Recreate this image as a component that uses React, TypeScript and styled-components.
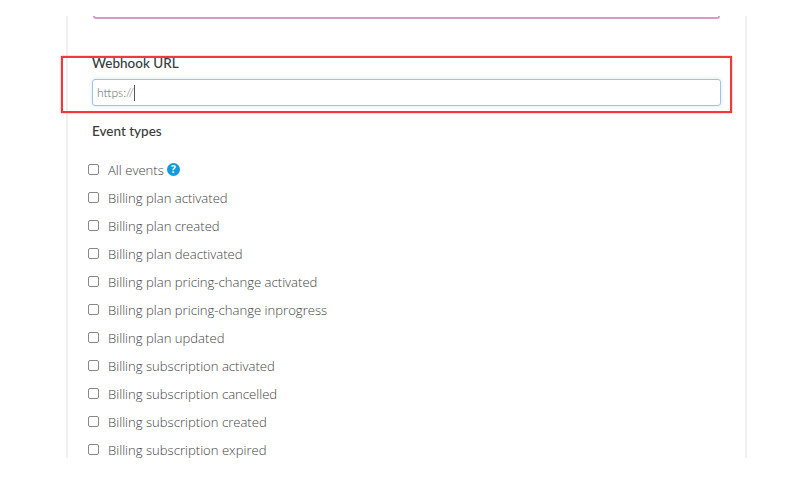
import React from "react";
import styled, { createGlobalStyle } from "styled-components";

const Global = createGlobalStyle`
  html, body { margin: 0; padding: 0; background: #fff; }
  body { width: 808px; height: 492px; overflow: hidden; font-family: "Open Sans", "Noto Sans", sans-serif; }
`;

const Page = styled.div`
  position: relative;
  width: 808px;
  height: 492px;
  padding: 16px 0 0 66px;
  box-sizing: border-box;
`;

const Panel = styled.div`
  width: 681px;
  height: 442px;
  box-sizing: border-box;
  border-left: 2px solid #f0f0f0;
  border-right: 2px solid #f0f0f0;
  padding: 0 24px 0 24px;
  overflow: hidden;
`;

const PinkEdge = styled.div`
  height: 1px;
  margin: 0 1px;
  border: 2px solid #d79ac3;
  border-top: 0;
  border-radius: 0 0 7px 7px;
`;

const Label = styled.div`
  margin-top: 36px;
  font-family: "Lato", sans-serif;
  font-size: 13.5px;
  line-height: 17px;
  font-weight: 500;
  color: #3a3a3a;
`;

const UrlInput = styled.div`
  margin-top: 7px;
  height: 27px;
  box-sizing: border-box;
  border: 1px solid #9cc4e6;
  border-radius: 3px;
  box-shadow: 0 0 4px #d5e9f8;
  padding: 0 4px;
  display: flex;
  align-items: center;
  font-family: "Lato", sans-serif;
  font-size: 12px;
  font-weight: 300;
  color: #666;
`;

const Caret = styled.span`
  width: 1px;
  height: 16px;
  background: #555;
`;

const SectionTitle = styled(Label)`
  margin-top: 17px;
`;

const List = styled.div`
  margin-top: 16px;
  display: flex;
  flex-direction: column;
`;

const Row = styled.div`
  height: 28px;
  display: flex;
  align-items: center;
  margin-left: -4px;
  gap: 9px;
  font-size: 13.1px;
  font-weight: 300;
  color: #444;
`;

const Box = styled.span`
  width: 9px;
  height: 9px;
  margin-top: -2px;
  border: 1px solid #888;
  border-radius: 2px;
  background: #fff;
  flex: none;
`;

const Help = styled.span`
  display: inline-flex;
  align-items: center;
  justify-content: center;
  width: 13px;
  height: 13px;
  margin-left: 3px;
  border-radius: 50%;
  background: #0f9bdc;
  color: #fff;
  font-size: 10px;
  font-weight: 700;
  vertical-align: 2px;
`;

const Highlight = styled.div`
  position: absolute;
  left: 61px;
  top: 56px;
  width: 671px;
  height: 57px;
  box-sizing: border-box;
  border: 2px solid #f03a3a;
  box-shadow: 0 0 1px #f03a3a;
  pointer-events: none;
`;

const events = [
  "Billing plan activated",
  "Billing plan created",
  "Billing plan deactivated",
  "Billing plan pricing-change activated",
  "Billing plan pricing-change inprogress",
  "Billing plan updated",
  "Billing subscription activated",
  "Billing subscription cancelled",
  "Billing subscription created",
  "Billing subscription expired",
];

export default function App() {
  return (
    <Page>
      <Global />
      <Panel>
        <PinkEdge />
        <Label>Webhook URL</Label>
        <UrlInput>
          https://
          <Caret />
        </UrlInput>
        <SectionTitle>Event types</SectionTitle>
        <List>
          <Row>
            <Box />
            <span>
              All events<Help>?</Help>
            </span>
          </Row>
          {events.map((e) => (
            <Row key={e}>
              <Box />
              <span>{e}</span>
            </Row>
          ))}
        </List>
      </Panel>
      <Highlight />
    </Page>
  );
}
